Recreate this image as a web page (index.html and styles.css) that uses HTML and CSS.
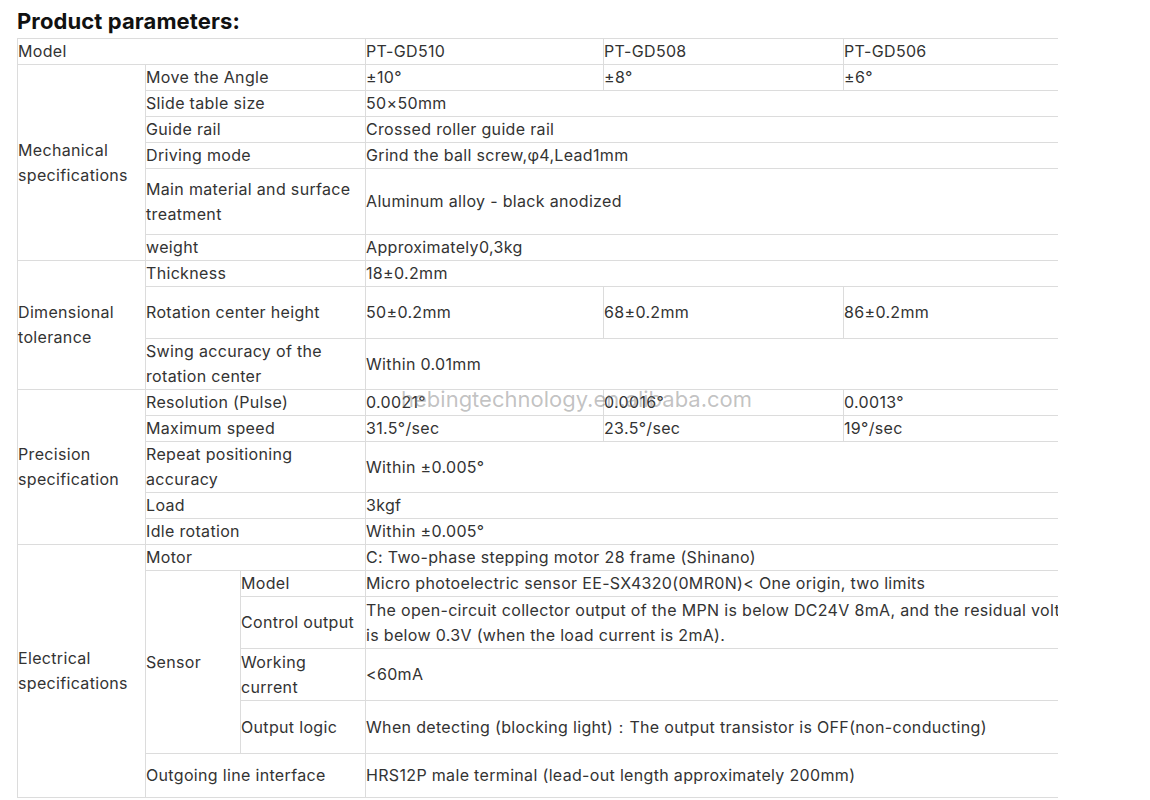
FILE: index.html
```html
<!DOCTYPE html>
<html lang="en">
<head>
<meta charset="utf-8">
<title>Product parameters</title>
<link rel="stylesheet" href="styles.css">
</head>
<body>
<div class="page">
  <h2 class="title">Product parameters:</h2>
  <div class="wrap">
    <table class="params">
      <colgroup>
        <col class="c1"><col class="c2a"><col class="c2b"><col class="v1"><col class="v2"><col class="v3">
      </colgroup>
      <tbody>
        <tr class="h26"><td colspan="3">Model</td><td>PT-GD510</td><td>PT-GD508</td><td>PT-GD506</td></tr>
        <tr class="h26"><td rowspan="6">Mechanical specifications</td><td colspan="2">Move the Angle</td><td>±10°</td><td>±8°</td><td>±6°</td></tr>
        <tr class="h26"><td colspan="2">Slide table size</td><td colspan="3">50×50mm</td></tr>
        <tr class="h26"><td colspan="2">Guide rail</td><td colspan="3">Crossed roller guide rail</td></tr>
        <tr class="h26"><td colspan="2">Driving mode</td><td colspan="3">Grind the ball screw,φ4,Lead1mm</td></tr>
        <tr class="h66"><td colspan="2">Main material and surface treatment</td><td colspan="3">Aluminum alloy - black anodized</td></tr>
        <tr class="h26"><td colspan="2">weight</td><td colspan="3">Approximately0,3kg</td></tr>
        <tr class="h26"><td rowspan="3">Dimensional tolerance</td><td colspan="2">Thickness</td><td colspan="3">18±0.2mm</td></tr>
        <tr class="h52"><td colspan="2">Rotation center height</td><td>50±0.2mm</td><td>68±0.2mm</td><td>86±0.2mm</td></tr>
        <tr class="h51"><td colspan="2">Swing accuracy of the rotation center</td><td colspan="3">Within 0.01mm</td></tr>
        <tr class="h26"><td rowspan="5">Precision specification</td><td colspan="2">Resolution (Pulse)</td><td>0.0021°</td><td>0.0016°</td><td>0.0013°</td></tr>
        <tr class="h26"><td colspan="2">Maximum speed</td><td>31.5°/sec</td><td>23.5°/sec</td><td>19°/sec</td></tr>
        <tr class="h51"><td colspan="2">Repeat positioning accuracy</td><td colspan="3">Within ±0.005°</td></tr>
        <tr class="h26"><td colspan="2">Load</td><td colspan="3">3kgf</td></tr>
        <tr class="h26"><td colspan="2">Idle rotation</td><td colspan="3">Within ±0.005°</td></tr>
        <tr class="h26"><td rowspan="6">Electrical specifications</td><td colspan="2">Motor</td><td colspan="3">C: Two-phase stepping motor 28 frame (Shinano)</td></tr>
        <tr class="h26"><td rowspan="4">Sensor</td><td>Model</td><td colspan="3">Micro photoelectric sensor EE-SX4320(0MR0N)&lt; One origin, two limits</td></tr>
        <tr class="h52"><td>Control output</td><td colspan="3">The open-circuit collector output of the MPN is below DC24V 8mA, and the residual voltage is below 0.3V (when the load current is 2mA).</td></tr>
        <tr class="h52"><td>Working current</td><td colspan="3">&lt;60mA</td></tr>
        <tr class="h53"><td>Output logic</td><td colspan="3">When detecting (blocking light)：The output transistor is OFF(non-conducting)</td></tr>
        <tr class="h44"><td colspan="2">Outgoing line interface</td><td colspan="3">HRS12P male terminal (lead-out length approximately 200mm)</td></tr>
      </tbody>
    </table>
    <div class="watermark">hebingtechnology.en.alibaba.com</div>
  </div>
</div>
</body>
</html>
```

FILE: styles.css
```css
html, body {
  margin: 0;
  padding: 0;
  background: #ffffff;
}

body {
  font-family: Inter, "Noto Sans", "Liberation Sans", sans-serif;
  color: #333333;
}

.page {
  padding: 8px 0 0 17px;
}

.title {
  margin: 0 0 4px 0;
  font-size: 22px;
  line-height: 26px;
  font-weight: 700;
  color: #111111;
  letter-spacing: 0.1px;
}

.wrap {
  position: relative;
  width: 1041px;
  overflow: hidden;
}

.params {
  border-collapse: collapse;
  table-layout: fixed;
  width: 1082px;
  font-size: 16px;
  line-height: 25px;
  letter-spacing: 0.33px;
  color: #333333;
}

.c1 { width: 128px; }
.c2a { width: 95px; }
.c2b { width: 125px; }
.v1 { width: 238px; }
.v2 { width: 240px; }
.v3 { width: 256px; }

.params td {
  border: 1px solid #dcdcdc;
  padding: 0;
  vertical-align: middle;
  text-align: left;
}

.h26 { height: 26px; }
.h44 { height: 44px; }
.h51 { height: 51px; }
.h52 { height: 52px; }
.h53 { height: 53px; }
.h66 { height: 66px; }

.watermark {
  position: absolute;
  left: 384px;
  top: 347px;
  font-size: 22px;
  line-height: 28px;
  color: rgba(120, 120, 120, 0.45);
  pointer-events: none;
  white-space: nowrap;
}
```
